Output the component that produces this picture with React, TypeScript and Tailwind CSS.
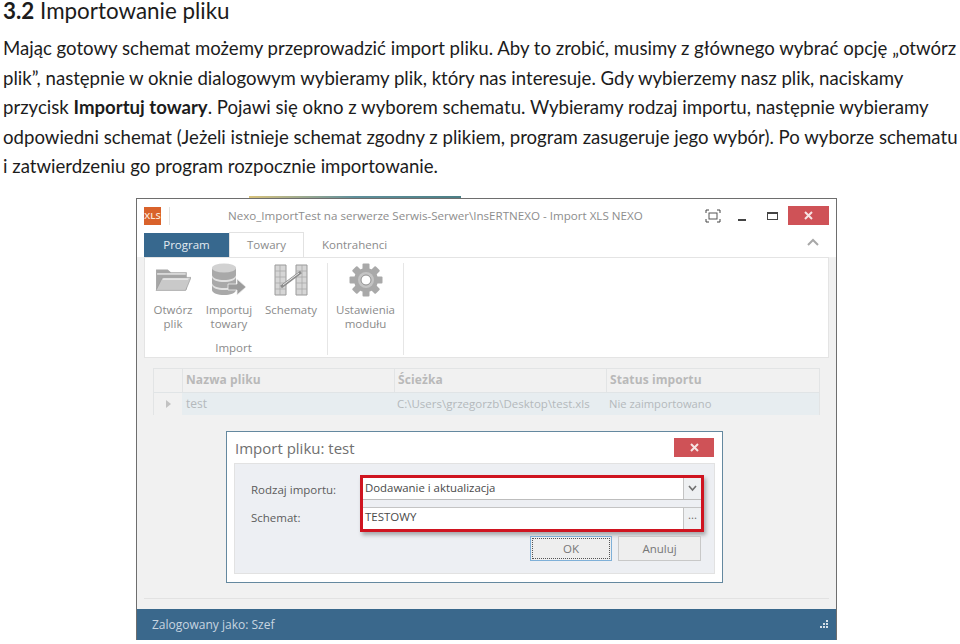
import React from "react";

const bodyFont = "font-['Lato','Noto_Sans',sans-serif]";
const uiFont = "font-['Open_Sans','Noto_Sans',sans-serif]";

const FolderIcon = () => (
  <svg width="36" height="26" viewBox="0 0 34 30" preserveAspectRatio="none">
    <path d="M1 3h11l3 3h15v20H1z" fill="#a6a6a6" />
    <path d="M2 7h27v2H2z" fill="#dcdcdc" />
    <path d="M7 12h27l-5 15H1z" fill="#c9c9c9" stroke="#9a9a9a" strokeWidth="0.7" />
    <path d="M8 13h24l-1 2H7z" fill="#e4e4e4" />
  </svg>
);

const DatabaseIcon = () => (
  <svg width="36" height="34" viewBox="0 0 36 34">
    <path d="M1 5v22c0 3 6 5 12 5s12-2 12-5V5z" fill="#a9a9a9" />
    <ellipse cx="13" cy="5" rx="12" ry="4.5" fill="#d2d2d2" />
    <path d="M1 12c0 3 6 5 12 5s12-2 12-5v2c0 3-6 5-12 5S1 17 1 14z" fill="#e2e2e2" />
    <path d="M1 20c0 3 6 5 12 5s12-2 12-5v2c0 3-6 5-12 5S1 25 1 22z" fill="#e2e2e2" />
    <path d="M17 21h9v-5l9 8-9 8v-5h-9z" fill="#9c9c9c" stroke="#eee" strokeWidth="0.8" />
  </svg>
);

const SchemaIcon = () => (
  <svg width="34" height="32" viewBox="0 0 34 32">
    <path d="M1 1h11v30H1zM22 1h11v30H22z" fill="#d6d6d6" stroke="#9a9a9a" />
    <path d="M1 7h11M1 13h11M1 19h11M1 25h11M22 7h11M22 13h11M22 19h11M22 25h11M6 1v30M28 1v30" stroke="#aaa" strokeWidth="0.8" />
    <path d="M7 23 27 8" stroke="#8c8c8c" strokeWidth="3" />
    <path d="M9 21 25 9" stroke="#e8e8e8" strokeWidth="1" />
  </svg>
);

const GearIcon = () => (
  <svg width="34" height="34" viewBox="0 0 34 34">
    <g fill="#a9a9a9">
      <circle cx="17" cy="17" r="12" />
      <rect x="13.5" y="0.5" width="7" height="33" rx="1" />
      <rect x="13.5" y="0.5" width="7" height="33" rx="1" transform="rotate(45 17 17)" />
      <rect x="13.5" y="0.5" width="7" height="33" rx="1" transform="rotate(90 17 17)" />
      <rect x="13.5" y="0.5" width="7" height="33" rx="1" transform="rotate(135 17 17)" />
    </g>
    <circle cx="17" cy="17" r="8" fill="#c4c4c4" />
    <circle cx="17" cy="17" r="5" fill="#fff" stroke="#8f8f8f" />
  </svg>
);

const CloseButton = ({ w }: { w: string }) => (
  <div className={`${w} h-[19px] bg-[#cf5257] flex items-center justify-center`}>
    <svg width="9" height="9" viewBox="0 0 9 9">
      <path d="M1 1l7 7M8 1 1 8" stroke="#f6e4e4" strokeWidth="2" />
    </svg>
  </div>
);

const RibbonButton = ({ icon, label, w }: { icon: React.ReactNode; label: string[]; w: string }) => (
  <div className={`${w} flex flex-col items-center`}>
    <div className="h-[34px] flex items-center justify-center">{icon}</div>
    <div className="mt-[6px] text-center text-[11.5px] leading-[14px] text-[#8b8b8b]">
      {label.map((l) => (
        <div key={l}>{l}</div>
      ))}
    </div>
  </div>
);

const AppWindow = () => (
  <div className={`relative ml-[136px] mt-[16px] w-[701px] h-[442px] border border-[#6e6e6e] border-b-0 bg-[#f1f1f1] flex flex-col ${uiFont}`}>
    {/* sliver of the picture behind */}
    <div className="absolute left-[112px] top-[-3px] h-[2px] w-[212px] bg-gradient-to-r from-[#d8c27a] via-[#5f8f9a] to-[#4c7f86]" />

    {/* title bar */}
    <div className="h-[33px] bg-white flex items-center pl-[7px] pr-[7px] shrink-0">
      <div className="w-[17px] h-[18px] bg-[#d9622b] text-[#fbe6d8] text-[9.5px] leading-[18px] text-center font-semibold">XLS</div>
      <div className="w-px h-[18px] bg-[#e4e4e4] ml-[8px]" />
      <div className="ml-[58px] text-[11.6px] text-[#8d8d8d] whitespace-nowrap">
        Nexo_ImportTest na serwerze Serwis-Serwer\InsERTNEXO - Import XLS NEXO
      </div>
      <div className="flex-1" />
      <svg width="16" height="14" viewBox="0 0 16 14" className="mr-[17px]">
        <path d="M1 4V1h3M12 1h3v3M1 10v3h3M15 10v3h-3" fill="none" stroke="#444" />
        <rect x="4" y="4" width="8" height="6" fill="none" stroke="#555" />
      </svg>
      <div className="w-[8px] h-[2px] bg-[#444] mt-[8px] mr-[21px]" />
      <div className="w-[11px] h-[8px] border border-[#444] border-t-2 mr-[10px]" />
      <CloseButton w="w-[41px]" />
    </div>

    {/* tabs */}
    <div className="h-[25px] flex items-end pl-[7px] pr-[17px] bg-white shrink-0 text-[11.5px]">
      <div className="w-[85px] h-[24px] bg-[#37688e] text-[#e3ebf1] flex items-center justify-center">Program</div>
      <div className="w-[75px] h-[25px] border border-b-0 border-[#e2e2e2] bg-white text-[#8b8b8b] flex items-center justify-center">Towary</div>
      <div className="ml-[18px] h-[24px] text-[#8b8b8b] flex items-center">Kontrahenci</div>
      <div className="flex-1" />
      <svg width="12" height="8" viewBox="0 0 12 8" className="mb-[11px]">
        <path d="M1 7l5-5 5 5" fill="none" stroke="#a8a8a8" strokeWidth="2" />
      </svg>
    </div>

    {/* ribbon */}
    <div className="mx-[7px] h-[101px] bg-white border border-[#e4e4e4] shrink-0 flex pt-[5px] pb-[2px]">
      <div className="flex flex-col w-[183px] border-r border-[#e6e6e6]">
        <div className="flex flex-1 pl-[1px]">
          <RibbonButton w="w-[54px]" icon={<FolderIcon />} label={["Otwórz", "plik"]} />
          <RibbonButton w="w-[58px]" icon={<DatabaseIcon />} label={["Importuj", "towary"]} />
          <RibbonButton w="w-[66px]" icon={<SchemaIcon />} label={["Schematy"]} />
        </div>
        <div className="text-center text-[11.5px] leading-[14px] text-[#8b8b8b] pr-[5px]">Import</div>
      </div>
      <div className="w-[76px] border-r border-[#e6e6e6]">
        <RibbonButton w="w-[75px]" icon={<GearIcon />} label={["Ustawienia", "modułu"]} />
      </div>
    </div>

    {/* grid */}
    <div className="mx-[16px] mt-[10px] h-[47px] border border-[#e2e4e5] shrink-0 text-[12px]">
      <div className="h-[23px] flex font-bold text-[#b9b9b9] tracking-[0.1px]">
        <div className="w-[28px]" />
        <div className="w-[212px] border-l border-[#e2e4e5] pl-[3px] leading-[22px]">Nazwa pliku</div>
        <div className="w-[212px] border-l border-[#e2e4e5] pl-[3px] leading-[22px]">Ścieżka</div>
        <div className="flex-1 border-l border-[#e2e4e5] pl-[3px] leading-[22px]">Status importu</div>
      </div>
      <div className="h-[23px] flex bg-[#e7edf0] text-[#b4b9bc] border-t border-[#e0e4e6]">
        <div className="w-[28px] bg-[#f1f1f1] flex items-center justify-center">
          <svg width="5" height="8" viewBox="0 0 5 8"><path d="M0 0l5 4-5 4z" fill="#c2c2c2" /></svg>
        </div>
        <div className="w-[212px] pl-[4px] leading-[22px]">test</div>
        <div className="w-[212px] pl-[3px] leading-[22px] whitespace-nowrap text-[11.5px]">C:\Users\grzegorzb\Desktop\test.xls</div>
        <div className="flex-1 pl-[3px] leading-[22px] text-[11.2px]">Nie zaimportowano</div>
      </div>
    </div>

    {/* lower frame + status bar */}
    <div className="flex-1 mx-[7px] border-b border-[#e2e2e2] mb-[10px]" />
    <div className="h-[31px] bg-[#3a688c] text-[#c7d5e0] text-[12px] flex items-center pl-[15px] pr-[6px] shrink-0">
      <span className="flex-1">Zalogowany jako: Szef</span>
      <svg width="10" height="10" viewBox="0 0 10 10">
        <path d="M6 0h2v2H6zM6 3h2v2H6zM3 3h2v2H3zM6 6h2v2H6zM3 6h2v2H3zM0 6h2v2H0z" fill="#d5dfe7" />
      </svg>
    </div>

    {/* import dialog */}
    <div className="absolute left-[89px] top-[232px] w-[497px] h-[152px] bg-white border border-[#64889f] flex flex-col">
      <div className="h-[31px] flex items-center justify-between pl-[8px] pr-[8px] shrink-0">
        <span className="mt-[2px] text-[15px] text-[#707070]">Import pliku: test</span>
        <CloseButton w="w-[40px]" />
      </div>
      <div className="relative mx-[7px] h-[111px] bg-[#edeff3] border border-[#e2e2e2] text-[11.5px] text-[#5c5c5c]">
        <div className="absolute left-[16px] top-[17px]">Rodzaj importu:</div>
        <div className="absolute left-[16px] top-[45px]">Schemat:</div>
        <div className="absolute left-[125px] top-[11px] w-[344px] h-[57px] border-[3px] border-[#cf1420] shadow-[2px_3px_4px_rgba(0,0,0,0.3)] flex flex-col justify-between bg-[#edeff3] text-[#4a4a4a]">
          <div className="h-[22px] flex bg-white border-b border-[#bdbdbd]">
            <span className="flex-1 pl-[2px] leading-[20px] text-[11.4px]">Dodawanie i aktualizacja</span>
            <div className="w-[18px] border-l border-[#c4c4c4] bg-[#eef0f2] flex items-center justify-center">
              <svg width="9" height="7" viewBox="0 0 9 7"><path d="M1 1l3.5 4L8 1" fill="none" stroke="#6f6f6f" strokeWidth="1.6" /></svg>
            </div>
          </div>
          <div className="h-[22px] flex bg-white border-t border-[#c4c4c4]">
            <span className="flex-1 pl-[2px] leading-[18px]">TESTOWY</span>
            <div className="w-[18px] border-l border-[#c4c4c4] bg-[#eef0f2] text-center leading-[14px] text-[#6f6f6f]">...</div>
          </div>
        </div>
        <div className="absolute left-[295px] top-[72px] w-[82px] h-[25px] bg-[#eeeeee] border border-[#7fb0d8] p-[1px] text-[#777]">
          <div className="w-full h-full border border-dotted border-[#555] flex items-center justify-center">OK</div>
        </div>
        <div className="absolute left-[383px] top-[72px] w-[83px] h-[25px] bg-[#eeeeee] border border-[#c8c8c8] text-[#777] flex items-center justify-center">Anuluj</div>
      </div>
    </div>
  </div>
);

export default function App() {
  return (
    <div className={`w-[960px] h-[644px] overflow-hidden bg-white text-[#1c1c1c] ${bodyFont}`}>
      <h1 className="pl-[3px] text-[22.4px] leading-[22px] font-normal">
        <b>3.2</b> Importowanie pliku
      </h1>
      <div className="mt-[12px] h-[148px] pl-[3px] text-[18.6px] leading-[29.5px] whitespace-nowrap">
        <p>Mając gotowy schemat możemy przeprowadzić import pliku. Aby to zrobić, musimy z głównego wybrać opcję „otwórz</p>
        <p>plik”, następnie w oknie dialogowym wybieramy plik, który nas interesuje. Gdy wybierzemy nasz plik, naciskamy</p>
        <p>przycisk <b>Importuj towary</b>. Pojawi się okno z wyborem schematu. Wybieramy rodzaj importu, następnie wybieramy</p>
        <p>odpowiedni schemat (Jeżeli istnieje schemat zgodny z plikiem, program zasugeruje jego wybór). Po wyborze schematu</p>
        <p>i zatwierdzeniu go program rozpocznie importowanie.</p>
      </div>
      <AppWindow />
    </div>
  );
}
